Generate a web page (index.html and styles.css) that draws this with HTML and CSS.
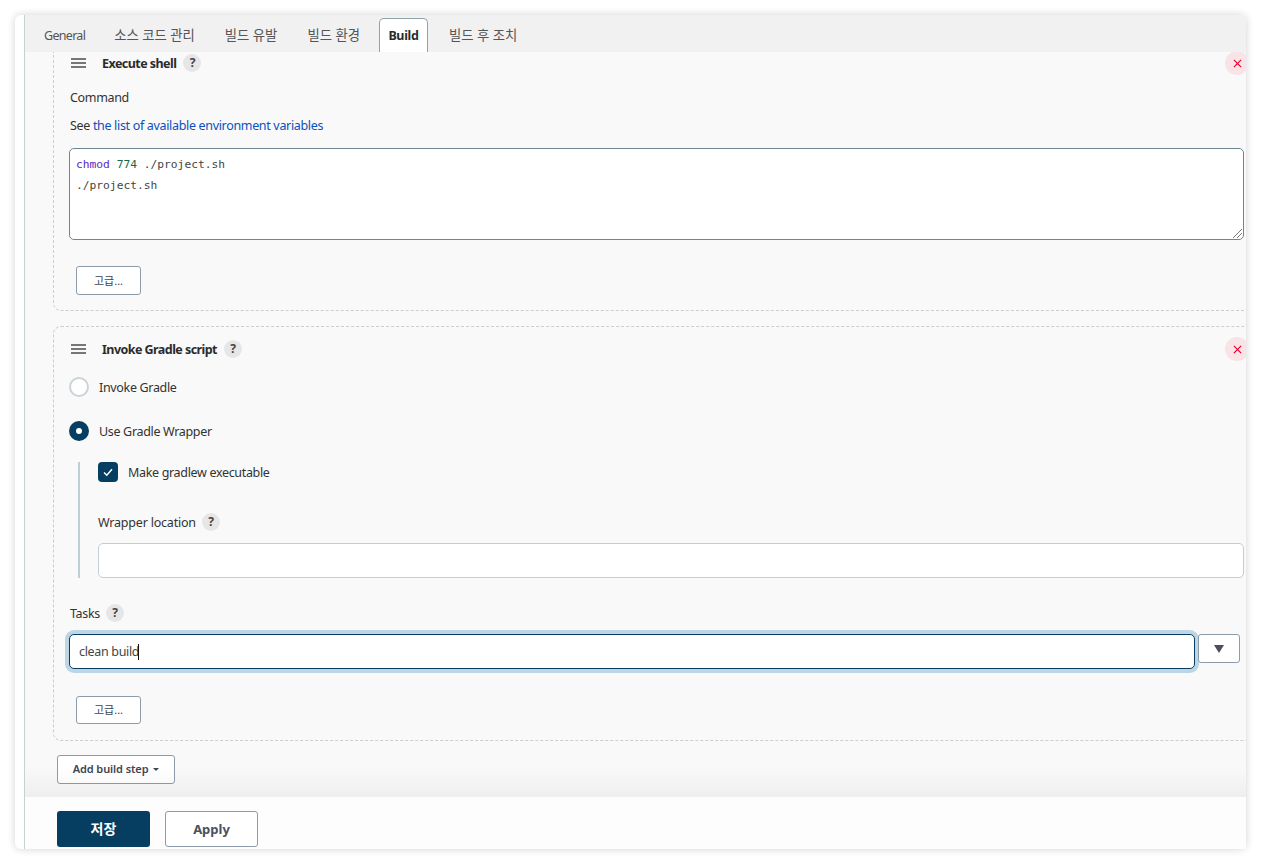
FILE: index.html
```html
<!DOCTYPE html>
<html lang="ko">
  <head>
    <meta charset="UTF-8">
    <title>Build configuration</title>
    <link rel="stylesheet" href="styles.css">
  </head>
  <body>
    <div class="window">
      <div class="panel">
        <nav class="tabs">
          <a class="tab tab-general">General</a>
          <a class="tab tab-ko">소스 코드 관리</a>
          <a class="tab tab-ko">빌드 유발</a>
          <a class="tab tab-ko">빌드 환경</a>
          <a class="tab active">Build</a>
          <a class="tab tab-ko">빌드 후 조치</a>
        </nav>

        <main class="content">
          <section class="step step-cut">
            <button class="close" aria-label="Delete">
              <svg viewBox="0 0 10 10" width="9" height="9" aria-hidden="true"><path d="M1 1l8 8M9 1l-8 8"/></svg>
            </button>
            <header class="step-head">
              <span class="handle"><i></i><i></i><i></i></span>
              <h3>Execute shell</h3>
              <span class="help">?</span>
            </header>
            <p class="label command-label">Command</p>
            <p class="label see">See <a href="#">the list of available environment variables</a></p>
            <div class="code">
              <div><span class="kw">chmod</span> <span class="num">774</span> ./project.sh</div>
              <div>./project.sh</div>
              <svg class="grip" viewBox="0 0 10 10" width="10" height="10" aria-hidden="true"><path d="M1 10L10 1M5 10l5-5"/></svg>
            </div>
            <button class="btn advanced">고급...</button>
          </section>

          <section class="step step-gradle">
            <button class="close" aria-label="Delete">
              <svg viewBox="0 0 10 10" width="9" height="9" aria-hidden="true"><path d="M1 1l8 8M9 1l-8 8"/></svg>
            </button>
            <header class="step-head">
              <span class="handle"><i></i><i></i><i></i></span>
              <h3>Invoke Gradle script</h3>
              <span class="help">?</span>
            </header>
            <div class="radio-row first">
              <span class="radio"></span>
              <span class="row-text">Invoke Gradle</span>
            </div>
            <div class="radio-row second">
              <span class="radio checked"></span>
              <span class="row-text">Use Gradle Wrapper</span>
            </div>
            <div class="nested">
              <div class="check-row">
                <span class="checkbox">
                  <svg viewBox="0 0 12 12" width="12" height="12" aria-hidden="true"><path d="M2 6.5l2.8 2.7L10 3.2"/></svg>
                </span>
                <span class="row-text">Make gradlew executable</span>
              </div>
              <div class="label-row wrapper-label">
                <span class="row-text">Wrapper location</span>
                <span class="help">?</span>
              </div>
              <div class="text-input wrapper-input"></div>
            </div>
            <div class="label-row tasks-label">
              <span class="row-text">Tasks</span>
              <span class="help">?</span>
            </div>
            <div class="tasks-row">
              <div class="text-input focused">clean build<span class="caret"></span></div>
              <button class="btn dropdown" aria-label="Expand"><span class="arrow"></span></button>
            </div>
            <button class="btn advanced advanced-gradle">고급...</button>
          </section>

          <button class="btn add-step">Add build step <span class="caret-down"></span></button>
        </main>

        <footer class="bottom-bar">
          <button class="btn-save">저장</button>
          <button class="btn-apply">Apply</button>
        </footer>
      </div>
    </div>
  </body>
</html>
```

FILE: styles.css
```css
*,
*::after,
*::before {
  box-sizing: border-box;
}

html,
body {
  height: 100%;
}

body {
  margin: 0;
  padding: 15px;
  background: #fff;
  color: #333;
  font-family: "Noto Sans", "Noto Sans CJK KR", sans-serif;
  font-size: 12.5px;
  letter-spacing: -0.33px;
  line-height: 20px;
  overflow: hidden;
}

button {
  font: inherit;
  letter-spacing: inherit;
  cursor: pointer;
}

p,
h3 {
  margin: 0;
}

a {
  color: #0b50bd;
  text-decoration: none;
}

.window {
  width: 1231px;
  height: 834px;
  padding-left: 9px;
  background: #fff;
  border-radius: 6px;
  box-shadow: 0 0 8px rgba(0, 0, 0, 0.18);
}

.panel {
  display: flex;
  flex-direction: column;
  height: 100%;
  border-left: 1px solid #c3d4cf;
  background: #f9f9f9;
  border-top-right-radius: 6px;
  overflow: hidden;
}

.tabs {
  display: flex;
  flex: none;
  gap: 10px;
  height: 37px;
  padding: 3px 0 0 9px;
  background: #f1f1f1;
}

.tab {
  display: flex;
  align-items: center;
  padding: 0 10px;
  color: #555;
}

.tab-general {
  padding: 2px 9px 0 10px;
  letter-spacing: -0.7px;
}

.tab-ko {
  font-size: 13.35px;
  letter-spacing: 0;
}

.tab.active {
  justify-content: center;
  width: 49px;
  margin: 0 1px 0 -1px;
  padding: 1px 0 0;
  background: #fff;
  color: #2b2b2b;
  font-weight: 700;
  border: 1px solid #8fa3ad;
  border-bottom: 0;
  border-radius: 5px 5px 0 0;
}

.content {
  flex: 1;
  min-height: 0;
  padding-left: 28px;
  overflow: hidden;
}

.step {
  position: relative;
  margin-right: -20px;
  padding: 0 21px 15px 15px;
  border: 1px dashed #c8ced2;
  border-radius: 8px;
}

.step-cut {
  border-top: 0;
  border-top-left-radius: 0;
  border-top-right-radius: 0;
}

.step-gradle {
  margin-top: 15px;
  padding-top: 11px;
  padding-bottom: 16px;
}

.step-head {
  display: flex;
  align-items: center;
  height: 22px;
}

.step-head h3 {
  margin-right: 7px;
  padding-top: 2px;
  color: #2b2b2b;
  font-size: 12.5px;
  font-weight: 700;
  letter-spacing: -0.55px;
}

.handle {
  display: flex;
  flex-direction: column;
  gap: 2px;
  width: 15px;
  margin: 0 16px 0 2px;
}

.handle i {
  display: block;
  height: 2px;
  background: #777;
}

.help {
  display: flex;
  flex: none;
  align-items: center;
  justify-content: center;
  width: 18px;
  height: 18px;
  border-radius: 50%;
  background: #e6e6e6;
  color: #444;
  font-size: 12px;
  font-weight: 700;
}

.close {
  position: absolute;
  top: -1px;
  right: 16px;
  display: flex;
  align-items: center;
  justify-content: center;
  width: 24px;
  height: 24px;
  padding: 0;
  border: 0;
  border-radius: 50%;
  background: #f8e3e6;
}

.step-cut .close {
  top: -1px;
}

.step-gradle .close {
  top: 10px;
}

.close svg {
  fill: none;
  stroke: #e6002e;
  stroke-width: 1.3;
}

.label {
  padding-left: 1px;
}

.command-label {
  margin-top: 14px;
}

.see {
  margin-top: 8px;
}

.code {
  position: relative;
  height: 92px;
  margin-top: 12px;
  padding: 5px 6px;
  background: #fff;
  border: 1px solid #6f8592;
  border-radius: 5px;
  color: #444;
  font-family: "DejaVu Sans Mono", monospace;
  font-size: 11.25px;
  letter-spacing: 0;
  line-height: 21px;
}

.kw {
  color: #5a2abd;
}

.num {
  color: #14694a;
}

.grip {
  position: absolute;
  right: 1px;
  bottom: 1px;
  fill: none;
  stroke: #777;
}

.btn {
  display: block;
  background: #fff;
  border: 1px solid #8d9ca8;
  border-radius: 3px;
  color: #3d4552;
}

.advanced {
  width: 65px;
  height: 29px;
  margin: 26px 0 0 7px;
  padding: 0;
  font-size: 11px;
  letter-spacing: 0;
}

.advanced-gradle {
  height: 28px;
  margin-top: 27px;
}

.radio-row {
  display: flex;
  align-items: center;
  gap: 10px;
  height: 20px;
}

.row-text {
  padding-top: 2px;
}

.radio-row.first {
  margin-top: 17px;
}

.radio-row.second {
  margin-top: 24px;
}

.radio {
  flex: none;
  width: 20px;
  height: 20px;
  border: 2px solid #c9d3d8;
  border-radius: 50%;
  background: #fff;
}

.radio.checked {
  border: 7px solid #053e60;
}

.nested {
  margin: 21px 0 0 9px;
  padding-left: 18px;
  border-left: 2px solid #bfd0d4;
}

.check-row {
  display: flex;
  align-items: center;
  gap: 10px;
  height: 20px;
}

.checkbox {
  display: flex;
  flex: none;
  align-items: center;
  justify-content: center;
  width: 20px;
  height: 20px;
  border-radius: 4px;
  background: #053e60;
}

.checkbox svg {
  fill: none;
  stroke: #fff;
  stroke-width: 1.5;
}

.label-row {
  display: flex;
  align-items: center;
  gap: 6px;
  height: 20px;
}

.wrapper-label {
  margin-top: 30px;
}

.wrapper-label .row-text {
  letter-spacing: -0.2px;
}

.tasks-label {
  margin-top: 25px;
  padding-left: 1px;
}

.text-input {
  height: 35px;
  background: #fff;
  border: 1px solid #c5cdd3;
  border-radius: 5px;
}

.wrapper-input {
  margin-top: 11px;
}

.tasks-row {
  display: flex;
  gap: 3px;
  margin-top: 11px;
}

.text-input.focused {
  flex: 1;
  display: flex;
  align-items: center;
  padding-left: 9px;
  border-color: #053e60;
  box-shadow: 0 0 0 4px #bcd6e6;
  color: #444;
}

.caret {
  width: 1px;
  height: 16px;
  margin-left: -1px;
  background: #111;
}

.dropdown {
  display: flex;
  flex: none;
  align-items: center;
  justify-content: center;
  width: 42px;
  height: 29px;
  margin-right: 4px;
  padding: 0;
}

.arrow {
  width: 0;
  height: 0;
  border-top: 8px solid #4a4f59;
  border-left: 5px solid transparent;
  border-right: 5px solid transparent;
}

.add-step {
  width: 118px;
  height: 29px;
  margin: 14px 0 0 4px;
  padding: 0 0 2px;
  font-size: 11px;
  font-weight: 600;
  letter-spacing: -0.1px;
}

.caret-down {
  display: inline-block;
  width: 0;
  height: 0;
  margin-left: 2px;
  vertical-align: 2px;
  border-top: 3px solid #3d4552;
  border-left: 3px solid transparent;
  border-right: 3px solid transparent;
}

.bottom-bar {
  position: relative;
  display: flex;
  flex: none;
  gap: 15px;
  height: 52px;
  padding: 14px 0 0 32px;
  background: #fdfdfd;
}

.bottom-bar::before {
  content: "";
  position: absolute;
  left: 0;
  right: 0;
  bottom: 100%;
  height: 30px;
  background: linear-gradient(rgba(0, 0, 0, 0), rgba(0, 0, 0, 0.045));
  pointer-events: none;
}

.btn-save,
.btn-apply {
  width: 93px;
  height: 36px;
  padding: 0;
  border-radius: 3px;
  font-size: 13px;
  font-weight: 700;
  letter-spacing: 0;
}

.btn-save {
  background: #053e60;
  border: 0;
  color: #fff;
  font-size: 14px;
}

.btn-apply {
  background: #fff;
  border: 1px solid #8d9ca8;
  color: #4a5160;
}
```
